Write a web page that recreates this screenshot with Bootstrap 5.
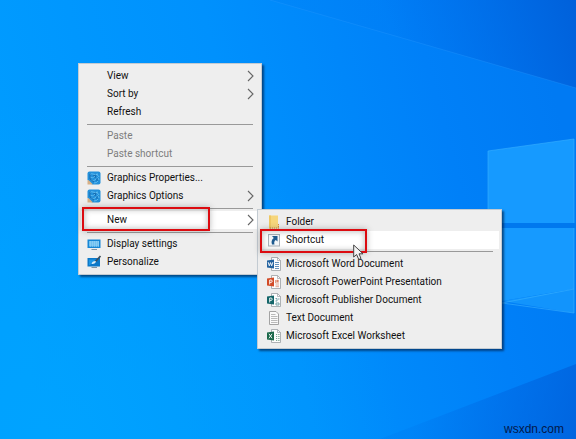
<!DOCTYPE html>
<html lang="en">
<head>
<meta charset="utf-8">
<meta name="viewport" content="width=device-width, initial-scale=1">
<title>Desktop – New Shortcut</title>
<link href="https://cdn.jsdelivr.net/npm/bootstrap@5.3.0/dist/css/bootstrap.min.css" rel="stylesheet">
<style>
  body { font-family: Roboto, "Open Sans", sans-serif; font-size: 10px; line-height: 18px; color: #111; background: #008cfb; }
  .wallpaper { z-index: -1; }
  .desktop { padding: 63px 0 0 78px; }
  .ctx { background: #eeeeee; border: 1px solid #c3cbd2; padding: 3px 2px; box-shadow: 2px 2px 2px rgba(0, 30, 70, .65); }
  .ctx-main { width: 184px; }
  .ctx-sub { width: 245px; left: 176px; top: -2px; z-index: 2; }
  .ctx-btn { height: 18px; padding: 0 5px 0 6px; border: 0; background: transparent; color: inherit; text-align: left; }
  .ctx-btn:disabled { color: #7d7d7d; }
  .ctx-btn.chosen { background: #fff; }
  .ctx-sub .ctx-btn { padding-left: 7px; }
  .glyph { width: 14px; height: 14px; margin-right: 6px; flex: none; }
  .ctx-sub .glyph { margin-right: 5px; }
  .arrow { width: 7px; height: 12px; }
  .rule { height: 6px; padding: 3px 6px 0; }
  .rule::before { content: ""; display: block; height: 1px; background: #999; }
  .ctx-sub .rule { padding: 2px 6px 0; }
  .callout { border: 2px solid #dc0b10; height: 24px; pointer-events: none; z-index: 3;
    box-shadow: inset 0 0 6px rgba(60, 60, 60, .4), 0 0 6px rgba(60, 60, 60, .35); }
  .callout-new { left: 1px; top: -4px; width: 128px; }
  .callout-shortcut { left: 0; top: -2px; width: 107px; }
  .pointer { width: 11px; height: 17px; left: 93px; top: 13px; z-index: 4; }
  .site { right: 12px; bottom: 1px; font: 12px/18px "Liberation Sans", Arial, sans-serif; color: #03184a; }
</style>
<script src="https://cdn.jsdelivr.net/npm/bootstrap@5.3.0/dist/js/bootstrap.bundle.min.js"></script>
</head>
<body class="position-relative min-vh-100 overflow-hidden">

<svg class="wallpaper position-absolute top-0 start-0 w-100 h-100" viewBox="0 0 576 439" preserveAspectRatio="xMaxYMin slice" aria-hidden="true">
  <defs>
    <linearGradient id="sky" x1="0" y1=".6" x2="1" y2=".4">
      <stop offset="0" stop-color="#009dff"/><stop offset=".45" stop-color="#0091fd"/><stop offset=".8" stop-color="#0080f8"/><stop offset="1" stop-color="#007af3"/>
    </linearGradient>
    <linearGradient id="dusk" gradientUnits="userSpaceOnUse" x1="400" y1="60" x2="576" y2="0">
      <stop offset="0" stop-color="#0068e6" stop-opacity=".1"/><stop offset="1" stop-color="#005cd6" stop-opacity=".85"/>
    </linearGradient>
    <linearGradient id="floor" gradientUnits="userSpaceOnUse" x1="420" y1="400" x2="576" y2="439">
      <stop offset="0" stop-color="#0068e4" stop-opacity=".15"/><stop offset="1" stop-color="#005fda" stop-opacity=".8"/>
    </linearGradient>
    <radialGradient id="low" gradientUnits="userSpaceOnUse" cx="60" cy="440" r="340">
      <stop offset="0" stop-color="#00a6ff" stop-opacity=".7"/><stop offset="1" stop-color="#00a6ff" stop-opacity="0"/>
    </radialGradient>
  </defs>
  <rect width="576" height="439" fill="url(#sky)"/>
  <rect width="576" height="439" fill="url(#low)"/>
  <path d="M270 0L576 88V0Z" fill="url(#dusk)"/>
  <path d="M270 0L576 88" stroke="#2c9cff" stroke-opacity=".3" fill="none"/>
  <path d="M380 439L576 364V439Z" fill="url(#floor)"/>
  <path d="M488 151L574 139V223H488ZM488 228H574V289L502 301L488 299Z" fill="#169aff"/>
  <path d="M502 301L574 289V313Z" fill="#1294fc"/>
  <path d="M488 223V151L574 139V223M574 228V313L502 303L574 289" fill="none" stroke="#38b0ff" stroke-opacity=".6"/>
  <path d="M488 223H576V228H488Z" fill="#0078ee"/>
</svg>

<svg class="d-none" aria-hidden="true">
  <symbol id="i-arrow" viewBox="0 0 7 12"><path d="M1 1L6 6L1 11" fill="none" stroke="#666" stroke-width="1.1"/></symbol>
  <symbol id="i-gfx" viewBox="0 0 14 14">
    <path d="M2.500 .5H11.500Q13.500 .5 13.500 2.500V11.500Q13.500 13.500 11.500 13.500H5L.5 9V2.500Q.5 .5 2.500 .5Z" fill="#2390da"/>
    <path d="M3 4Q4 2 6 3T11 3M3 6Q6 8 8 5T12 6M4 9Q7 11 9 8T12 9M7 12Q10 12 11 10" fill="none" stroke="#6cc4f2" stroke-width=".8"/>
    <path d="M6 5L9 4L8 7M10 7V10M3 3V8L7 11" fill="none" stroke="#1468ac" stroke-width=".9"/>
    <path d="M.5 9.500L1.500 9L6 13.500H.5Z" fill="#d6b088"/>
  </symbol>
  <symbol id="i-display" viewBox="0 0 14 14">
    <rect x=".5" y="2.500" width="13" height="8.500" fill="#1686d5"/><rect x="2" y="4" width="10" height="5.500" fill="#70c0f0"/>
    <path d="M3 5H12M3 7H12M3 9H12" stroke="#a9def8" stroke-dasharray="1 1" stroke-width=".8"/><path d="M4.500 12.500H10" stroke="#8294a2"/>
  </symbol>
  <symbol id="i-person" viewBox="0 0 14 14">
    <rect x=".5" y="3" width="12.500" height="8.500" fill="#0c78c8"/><path d="M2 4.500H9L5 8L3 10H2Z" fill="#1b96e5"/>
    <path d="M13.500 1L8 7" stroke="#40505d" stroke-width="1.700"/><path d="M8.500 6Q5 6 4.500 9Q7.500 9.500 9 7Z" fill="#d7effc"/><path d="M4.500 12.500H10" stroke="#8294a2"/>
  </symbol>
  <symbol id="i-folder" viewBox="0 0 14 14">
    <path d="M2 .5H11V10H12V13.500H2Z" fill="#f6d67c"/><path d="M2 .5H4V13.500H2Z" fill="#eec763"/><path d="M3 13H12M11.500 9V13" stroke="#cf7a3b" stroke-width=".9" stroke-dasharray="1 1"/>
  </symbol>
  <symbol id="i-link" viewBox="0 0 14 14">
    <rect x="1.500" y="1.500" width="11" height="11.500" fill="#f3f6f9" stroke="#a8b0b8"/>
    <path d="M5 3H10.500V8.500L8.800 7Q6.500 8.500 7.500 11.500H5Q3.500 7.500 6.800 5Z" fill="#1d5a8f"/>
  </symbol>
  <symbol id="i-page" viewBox="0 0 14 14"><path d="M4.500 .5H10.500L13.500 3.500V13.500H4.500Z" fill="#fdfdfd" stroke="#9b9fa3" stroke-width=".8"/><path d="M10.500 .5V3.500H13.500" fill="none" stroke="#9b9fa3" stroke-width=".7"/></symbol>
  <symbol id="i-word" viewBox="0 0 14 14">
    <use href="#i-page"/><path d="M8 5.500H12M8 7.500H12M8 9.500H12M8 11.500H12" stroke="#5587b5" stroke-width=".9"/><path d="M0 3.500L7 2.500V11.500L0 10.500Z" fill="#22629f"/><path d="M1.200 5.200L2.300 8.800L3.500 5.600L4.700 8.800L5.800 5.200" fill="none" stroke="#fff" stroke-width=".9"/>
  </symbol>
  <symbol id="i-ppt" viewBox="0 0 14 14">
    <use href="#i-page"/><path d="M8.500 5V8H12M8.500 10H12M8.500 11.700H12" fill="none" stroke="#dc9a82" stroke-width=".9"/><circle cx="10.500" cy="6" r="1.300" fill="#dc8468"/><path d="M0 3.500L7 2.500V11.500L0 10.500Z" fill="#d24a26"/><path d="M2.700 9.500V5H4Q5.200 5 5.200 6.200T4 7.400H2.700" fill="none" stroke="#fff" stroke-width=".9"/>
  </symbol>
  <symbol id="i-pub" viewBox="0 0 14 14">
    <use href="#i-page"/><path d="M8.500 5.500H10V8H8.500M11 6H12.500M9 10H12V12H9Z" fill="none" stroke="#689ba0" stroke-width=".9"/><path d="M0 3.500L7 2.500V11.500L0 10.500Z" fill="#136569"/><path d="M2.700 9.500V5H4Q5.200 5 5.200 6.200T4 7.400H2.700" fill="none" stroke="#fff" stroke-width=".9"/>
  </symbol>
  <symbol id="i-text" viewBox="0 0 14 14">
    <path d="M2.500 .5H9L11.500 3V13.500H2.500Z" fill="#fafafa" stroke="#9a9a9a" stroke-width=".9"/><path d="M4 3.500H8.500M4 5.500H10.500M4 7.500H10.500M4 9.500H10.500M4 11.500H10.500" stroke="#aaa" stroke-width=".8"/>
  </symbol>
  <symbol id="i-xls" viewBox="0 0 14 14">
    <use href="#i-page"/><path d="M9 5.500H10.200M11.200 5.500H12.500M9 7.500H10.200M11.200 7.500H12.500M9 9.500H10.200M11.200 9.500H12.500M9 11.500H10.200M11.200 11.500H12.500" stroke="#6f9f88" stroke-width=".9"/><path d="M0 3.500L7 2.500V11.500L0 10.500Z" fill="#1a6849"/><path d="M2 4.800L5 9.300M5 4.800L2 9.300" stroke="#fff" stroke-width=".9"/>
  </symbol>
</svg>

<main class="desktop">
  <ul class="ctx ctx-main list-unstyled mb-0" aria-label="Desktop menu">
    <li><button type="button" class="ctx-btn d-flex align-items-center w-100"><span class="glyph"></span>View<svg class="arrow ms-auto" aria-hidden="true"><use href="#i-arrow"/></svg></button></li>
    <li><button type="button" class="ctx-btn d-flex align-items-center w-100"><span class="glyph"></span>Sort by<svg class="arrow ms-auto" aria-hidden="true"><use href="#i-arrow"/></svg></button></li>
    <li><button type="button" class="ctx-btn d-flex align-items-center w-100"><span class="glyph"></span>Refresh</button></li>
    <li class="rule" role="separator"></li>
    <li><button type="button" class="ctx-btn d-flex align-items-center w-100" disabled><span class="glyph"></span>Paste</button></li>
    <li><button type="button" class="ctx-btn d-flex align-items-center w-100" disabled><span class="glyph"></span>Paste shortcut</button></li>
    <li class="rule" role="separator"></li>
    <li><button type="button" class="ctx-btn d-flex align-items-center w-100"><svg class="glyph" aria-hidden="true"><use href="#i-gfx"/></svg>Graphics Properties...</button></li>
    <li><button type="button" class="ctx-btn d-flex align-items-center w-100"><svg class="glyph" aria-hidden="true"><use href="#i-gfx"/></svg>Graphics Options<svg class="arrow ms-auto" aria-hidden="true"><use href="#i-arrow"/></svg></button></li>
    <li class="rule" role="separator"></li>
    <li class="position-relative">
      <button type="button" class="ctx-btn chosen d-flex align-items-center w-100" aria-expanded="true"><span class="glyph"></span>New<svg class="arrow ms-auto" aria-hidden="true"><use href="#i-arrow"/></svg></button>
      <div class="callout callout-new position-absolute"></div>
      <ul class="ctx ctx-sub list-unstyled position-absolute mb-0" aria-label="New">
        <li><button type="button" class="ctx-btn d-flex align-items-center w-100"><svg class="glyph" aria-hidden="true"><use href="#i-folder"/></svg>Folder</button></li>
        <li class="position-relative">
          <button type="button" class="ctx-btn chosen d-flex align-items-center w-100"><svg class="glyph" aria-hidden="true"><use href="#i-link"/></svg>Shortcut</button>
          <div class="callout callout-shortcut position-absolute"></div>
          <svg class="pointer position-absolute" viewBox="0 0 11 17" aria-hidden="true"><path d="M.7 1V13L3.600 10.500L5.800 15.500L8 14.500L6 9.800H10Z" fill="#f4f4f4" stroke="#444" stroke-width="1"/></svg>
        </li>
        <li class="rule" role="separator"></li>
        <li><button type="button" class="ctx-btn d-flex align-items-center w-100"><svg class="glyph" aria-hidden="true"><use href="#i-word"/></svg>Microsoft Word Document</button></li>
        <li><button type="button" class="ctx-btn d-flex align-items-center w-100"><svg class="glyph" aria-hidden="true"><use href="#i-ppt"/></svg>Microsoft PowerPoint Presentation</button></li>
        <li><button type="button" class="ctx-btn d-flex align-items-center w-100"><svg class="glyph" aria-hidden="true"><use href="#i-pub"/></svg>Microsoft Publisher Document</button></li>
        <li><button type="button" class="ctx-btn d-flex align-items-center w-100"><svg class="glyph" aria-hidden="true"><use href="#i-text"/></svg>Text Document</button></li>
        <li><button type="button" class="ctx-btn d-flex align-items-center w-100"><svg class="glyph" aria-hidden="true"><use href="#i-xls"/></svg>Microsoft Excel Worksheet</button></li>
      </ul>
    </li>
    <li class="rule" role="separator"></li>
    <li><button type="button" class="ctx-btn d-flex align-items-center w-100"><svg class="glyph" aria-hidden="true"><use href="#i-display"/></svg>Display settings</button></li>
    <li><button type="button" class="ctx-btn d-flex align-items-center w-100"><svg class="glyph" aria-hidden="true"><use href="#i-person"/></svg>Personalize</button></li>
  </ul>
</main>
<div class="site position-absolute">wsxdn.com</div>
</body>
</html>
